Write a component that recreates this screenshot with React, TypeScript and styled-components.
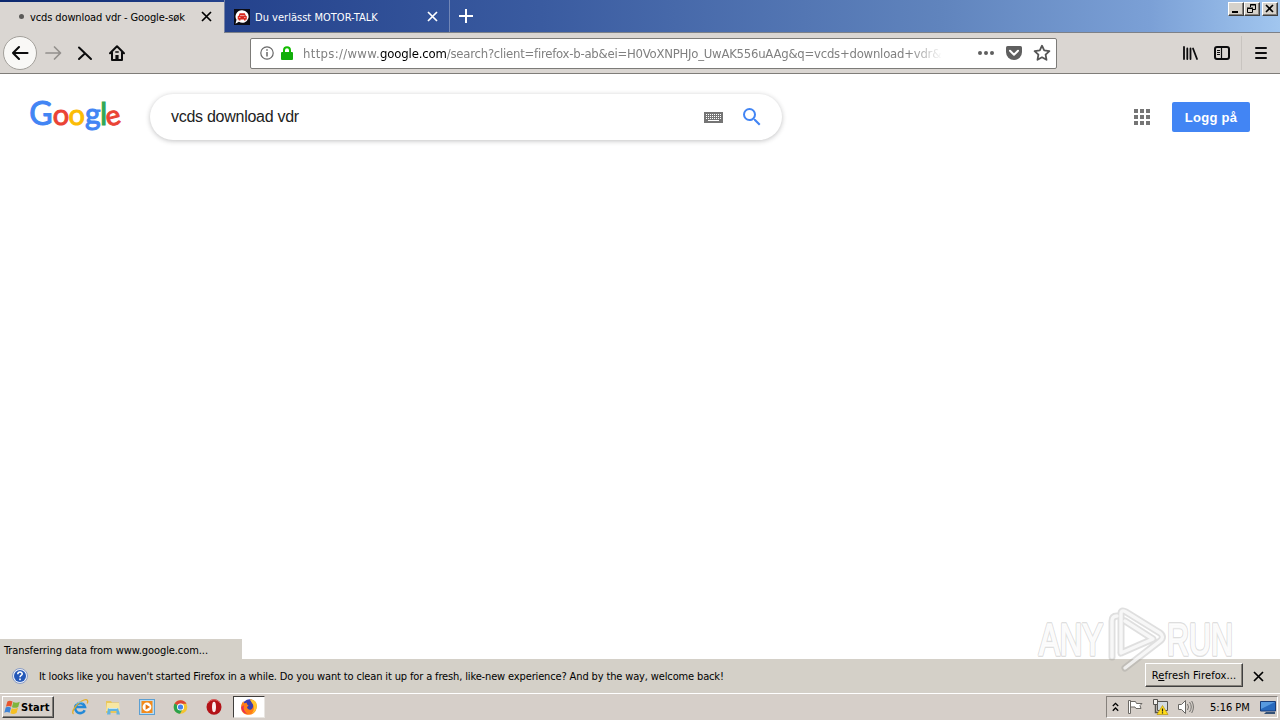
import React from 'react';
import styled, { createGlobalStyle } from 'styled-components';

const GlobalStyle = createGlobalStyle`
  * {
    box-sizing: border-box;
  }

  body {
    margin: 0;
    overflow: hidden;
    background: #ffffff;
    font-family: 'DejaVu Sans Condensed', 'DejaVu Sans', sans-serif;
    font-size: 11px;
    color: #000000;
  }

  svg {
    display: block;
    flex-shrink: 0;
  }
`;

const Desktop = styled.div`
  width: 1280px;
  height: 720px;
  display: flex;
  flex-direction: column;
  position: relative;
`;

const Label = styled.span<{ $size?: number; $spacing?: number }>`
  display: inline-block;
  padding-top: 2px;
  font-family: 'DejaVu Sans Condensed', 'DejaVu Sans', sans-serif;
  font-stretch: condensed;
  font-size: ${({ $size = 11 }) => $size}px;
  letter-spacing: ${({ $spacing = 0 }) => $spacing}px;
  line-height: 14px;
  white-space: nowrap;
`;

const TitleBar = styled.header`
  height: 33px;
  flex-shrink: 0;
  display: flex;
  border-bottom: 1px solid #7d8188;
  background: linear-gradient(90deg, #0c286e 0, #24428c 225px, #3a5ba0 540px, #6084bd 940px, #7ba0d6 1150px, #a1c6ef 1280px);
`;

const Tab = styled.div<{ $active?: boolean }>`
  width: ${({ $active }) => ($active ? 224 : 226)}px;
  height: ${({ $active }) => ($active ? 31 : 32)}px;
  margin-top: ${({ $active }) => ($active ? 2 : 0)}px;
  padding: ${({ $active }) => ($active ? '0 12px 2px 19px' : '1px 11px 0 9px')};
  display: flex;
  align-items: center;
  gap: ${({ $active }) => ($active ? 6 : 5)}px;
  color: ${({ $active }) => ($active ? '#000000' : '#ffffff')};
  background: ${({ $active }) => ($active ? '#dad6d2' : 'transparent')};
  border-left: ${({ $active }) => ($active ? 'none' : '1px solid #7482a6')};
  border-right: ${({ $active }) => ($active ? 'none' : '1px solid #7186b7')};

  svg:last-child {
    margin-left: auto;
  }
`;

const LoadingDot = styled.span`
  width: 5px;
  height: 5px;
  border-radius: 50%;
  background: #5b5a58;
`;

const NewTab = styled.div`
  padding: 8px 8px 0;
`;

const WindowButtons = styled.div`
  margin-left: auto;
  padding: 2px 2px 0 0;
  display: flex;
  align-items: flex-start;
`;

const WindowButton = styled.span<{ $gap?: boolean }>`
  width: 16px;
  height: 14px;
  margin-left: ${({ $gap }) => ($gap ? 2 : 0)}px;
  background: #d6d2cb;
  border: 1px solid;
  border-color: #ffffff #404040 #404040 #ffffff;
  box-shadow: inset -1px -1px 0 #85817c;
`;

const NavBar = styled.nav`
  height: 41px;
  flex-shrink: 0;
  padding: 0 10px 0 3px;
  display: flex;
  align-items: center;
  background: #dad6d2;
  border-bottom: 1px solid #7f7d79;
`;

const BackButton = styled.span`
  width: 34px;
  height: 34px;
  display: flex;
  align-items: center;
  justify-content: center;
  border: 1px solid #a3a09b;
  border-radius: 50%;
  background: #f9f8f6;
`;

const NavIcons = styled.div`
  width: 213px;
  padding-left: 6px;
  display: flex;
  gap: 12px;
`;

const UrlBar = styled.div`
  width: 807px;
  height: 31px;
  padding: 0 5px 0 9px;
  display: flex;
  align-items: center;
  background: #ffffff;
  border: 1px solid #7c7b78;
  border-radius: 2px;
`;

const UrlText = styled.div`
  width: 640px;
  margin-left: 10px;
  padding-top: 1px;
  overflow: hidden;
  white-space: nowrap;
  font-size: 13px;
  letter-spacing: -0.24px;
  line-height: 18px;
  color: #808080;
  mask-image: linear-gradient(90deg, #000 605px, transparent 640px);
`;

const UrlScheme = styled.span`
  letter-spacing: 0.32px;
`;

const UrlHost = styled.span`
  letter-spacing: -0.15px;
  color: #000000;
`;

const UrlActions = styled.div`
  margin-left: auto;
  display: flex;
  align-items: center;
  gap: 10px;
`;

const ToolbarEnd = styled.div`
  height: 34px;
  margin-left: auto;
  display: flex;
  align-items: center;
  gap: 14px;
`;

const MenuButton = styled.div`
  height: 34px;
  margin-left: -4px;
  padding-left: 10px;
  display: flex;
  align-items: center;
  border-left: 1px solid #c8c4c0;
`;

const Page = styled.main`
  flex: 1;
  display: flex;
  flex-direction: column;
  justify-content: space-between;
  background: #ffffff;
`;

const SearchHeader = styled.div`
  height: 86px;
  padding: 0 30px 0 26px;
  display: flex;
  align-items: center;
`;

const SearchBox = styled.div`
  width: 632px;
  height: 46px;
  margin-left: 24px;
  padding: 0 18px 0 21px;
  display: flex;
  align-items: center;
  background: #ffffff;
  border-radius: 23px;
  box-shadow: 0 1px 5px rgba(32, 33, 36, 0.28);
`;

const SearchQuery = styled.span`
  flex: 1;
  font-family: 'Liberation Sans', Arial, sans-serif;
  font-size: 16px;
  letter-spacing: -0.27px;
  line-height: 20px;
  color: #222222;
`;

const SearchIcons = styled.div`
  display: flex;
  align-items: center;
  gap: 17px;
`;

const AppsGrid = styled.div`
  margin-left: auto;
  display: grid;
  grid-template-columns: repeat(3, 4px);
  grid-auto-rows: 4px;
  gap: 2px;
`;

const AppsDot = styled.span`
  background: #757575;
`;

const SignInButton = styled.button`
  width: 78px;
  height: 30px;
  margin-left: 22px;
  padding: 0;
  border: none;
  border-radius: 2px;
  background: #4285f4;
  color: #ffffff;
  font-family: 'Liberation Sans', Arial, sans-serif;
  font-size: 13px;
  font-weight: bold;
  letter-spacing: 0.3px;
`;

const StatusBubble = styled.div`
  width: 242px;
  height: 20px;
  padding: 3px 0 0 4px;
  background: #d4d0c8;
`;

const NotificationBar = styled.div`
  height: 34px;
  flex-shrink: 0;
  padding: 0 16px 0 12px;
  display: flex;
  align-items: center;
  gap: 11px;
  background: #d4d0c8;
`;

const RefreshButton = styled.button`
  width: 98px;
  height: 24px;
  margin: -2px -1px 0 auto;
  padding: 0;
  border: 1px solid;
  border-color: #ffffff #404040 #404040 #ffffff;
  box-shadow: inset -1px -1px 0 #86827b;
  background: #d6d2ca;
`;

const Taskbar = styled.footer`
  height: 27px;
  flex-shrink: 0;
  padding: 2px 2px 0 2px;
  display: flex;
  align-items: flex-start;
  background: #d6cfc9;
  border-top: 1px solid #ffffff;
`;

const StartButton = styled.div`
  width: 52px;
  height: 22px;
  padding-left: 1px;
  display: flex;
  align-items: center;
  border: 1px solid;
  border-color: #ffffff #404040 #404040 #ffffff;
  box-shadow: inset -1px -1px 0 #807c77;

  span {
    font-weight: bold;
  }
`;

const QuickLaunch = styled.div`
  height: 22px;
  padding-left: 17px;
  display: flex;
  align-items: center;
  gap: 16px;
`;

const ActiveTask = styled.div`
  width: 32px;
  height: 22px;
  margin-left: 10px;
  display: flex;
  align-items: center;
  justify-content: center;
  background: #ffffff;
  border: 1px solid;
  border-color: #403e3c #e9e6e2 #e9e6e2 #403e3c;
`;

const Tray = styled.div`
  width: 172px;
  height: 22px;
  margin-left: auto;
  padding: 0 1px 0 5px;
  display: flex;
  align-items: center;
  gap: 8px;
  border: 1px solid;
  border-color: #86817c #ffffff #ffffff #86817c;
`;

const TrayClock = styled.div`
  width: 43px;
  margin-left: 7px;
  display: flex;
`;

const Watermark = styled.div`
  position: absolute;
  left: 1034px;
  top: 604px;
  pointer-events: none;
`;

const CloseIcon = ({ color = '#000', size = 11 }: { color?: string; size?: number }) => (
  <svg width={size} height={size} viewBox="0 0 11 11" stroke={color} strokeWidth="1.7">
    <path d="M1 1l9 9M10 1l-9 9" />
  </svg>
);

const MotorTalkIcon = () => (
  <svg width="16" height="16" viewBox="0 0 16 16">
    <rect width="16" height="16" fill="#0b0b14" />
    <path d="M8.3 1.2a6.3 6.3 0 1 1-3.4 11.6L1.5 14.8l1-4A6.3 6.3 0 0 1 8.3 1.2z" fill="#fff" />
    <path d="M5.6 4.2h5.2l1 2.5 1 .6v3.2h-1.2v1H10v-1H6.4v1H4.8v-1H3.7V7.3l1-.6z" fill="#d8261c" />
    <path d="M6 6.6h4.6M4.9 8.6h1.6M10 8.6h1.6" stroke="#fff" strokeWidth=".6" />
  </svg>
);

const ArrowIcon = ({ color, flip }: { color: string; flip?: boolean }) => (
  <svg width="20" height="18" viewBox="0 0 20 18" fill="none" stroke={color} strokeWidth={flip ? 1.7 : 2.1} strokeLinecap="round" strokeLinejoin="round">
    <path d={flip ? 'M3 9h14M11.5 3l6 6-6 6' : 'M17.5 9H3M9 3L3 9l6 6'} />
  </svg>
);

const StopIcon = () => (
  <svg width="20" height="18" viewBox="0 0 20 18" fill="none" stroke="#0c0c0d" strokeWidth="2" strokeLinecap="round">
    <path d="M4 3.5l12 11.5M9.6 9.8L4 15" />
  </svg>
);

const HomeIcon = () => (
  <svg width="20" height="18" viewBox="0 0 20 18" fill="none" stroke="#0c0c0d" strokeWidth="2" strokeLinejoin="round" strokeLinecap="round">
    <path d="M3 9.2L10 2.3l7 6.9M5 8.5V16h10V8.5" />
    <path d="M8.4 16v-5h3.2v5z" fill="#0c0c0d" stroke="none" />
    <path d="M8.8 8h2.4" strokeWidth="1.5" />
  </svg>
);

const InfoIcon = () => (
  <svg width="14" height="14" viewBox="0 0 14 14">
    <circle cx="7" cy="7" r="6.2" fill="none" stroke="#686868" strokeWidth="1.2" />
    <path d="M7 6v4.6M7 3.2v1.6" stroke="#686868" strokeWidth="1.5" />
  </svg>
);

const LockSvg = styled.svg`
  margin-left: 7px;
`;

const LockIcon = () => (
  <LockSvg width="12" height="14" viewBox="0 0 12 14">
    <path d="M3 7V4.2a3 3 0 0 1 6 0V7" fill="none" stroke="#12bc00" strokeWidth="2" />
    <rect y="6" width="12" height="8" rx="1" fill="#12ae0a" />
  </LockSvg>
);

const DotsIcon = () => (
  <svg width="18" height="16" viewBox="0 0 18 16" fill="#5f5f5f">
    <circle cx="3" cy="8" r="2" />
    <circle cx="9" cy="8" r="2" />
    <circle cx="15" cy="8" r="2" />
  </svg>
);

const PocketIcon = () => (
  <svg width="18" height="16" viewBox="0 0 18 16">
    <path d="M2.6 1h12.8Q17 1 17 2.6V7a8 8 0 0 1-16 0V2.6Q1 1 2.6 1z" fill="#5f5f5f" />
    <path d="M5 5.8l4 3.9 4-3.9" fill="none" stroke="#fff" strokeWidth="2" strokeLinecap="round" strokeLinejoin="round" />
  </svg>
);

const StarIcon = () => (
  <svg width="18" height="18" viewBox="0 0 18 18">
    <path d="M9 1.7l2.2 4.7 5.2.7-3.8 3.6.9 5.1L9 13.3l-4.5 2.5.9-5.1L1.6 7.1l5.2-.7z" fill="none" stroke="#555" strokeWidth="1.8" strokeLinejoin="round" />
  </svg>
);

const LibraryIcon = () => (
  <svg width="18" height="16" viewBox="0 0 18 16" stroke="#0c0c0d" strokeWidth="1.8" strokeLinecap="round">
    <path d="M3 2v12M6.3 3.5V14M9.5 3.5V14M12 3.5L16 14" />
  </svg>
);

const SidebarIcon = () => (
  <svg width="18" height="16" viewBox="0 0 18 16" fill="none" stroke="#0c0c0d">
    <rect x="2" y="2" width="14" height="12" rx="2" strokeWidth="2" />
    <path d="M8.5 2v12" strokeWidth="1.2" />
    <path d="M4 5.5h3M4 7.5h3M4 9.5h3" />
  </svg>
);

const MenuIcon = () => (
  <svg width="18" height="16" viewBox="0 0 18 16" stroke="#0c0c0d" strokeWidth="2" strokeLinecap="round">
    <path d="M4 3h10M4 8h10M4 13h10" />
  </svg>
);

const GoogleLogo = () => (
  <svg width="100" height="48" viewBox="-4 -2 100 48" fontFamily="Lato, sans-serif" fontSize="32" strokeWidth="1">
    <text x="-0.8" y="30" fill="#4285f4" stroke="#4285f4">G</text>
    <text x="22.8" y="30" fill="#ea4335" stroke="#ea4335" fontSize="29">o</text>
    <text x="38.6" y="30" fill="#fbbc05" stroke="#fbbc05" fontSize="29">o</text>
    <text x="55" y="30" fill="#4285f4" stroke="#4285f4" fontSize="30">g</text>
    <text x="70" y="30" fill="#34a853" stroke="#34a853" fontSize="31">l</text>
    <text x="75.8" y="30" fill="#ea4335" stroke="#ea4335" fontSize="28" transform="rotate(-14 84 23)">e</text>
  </svg>
);

const KeyboardIcon = () => (
  <svg width="19" height="11" viewBox="0 0 19 11">
    <rect width="19" height="11" fill="#757575" />
    <path d="M2 2.5h15M2 4.5h15M2 6.5h15" stroke="#fff" strokeDasharray="1 1" />
    <path d="M4 8.5h11" stroke="#fff" />
  </svg>
);

const SearchIcon = () => (
  <svg width="24" height="24" viewBox="0 0 24 24" fill="#4285f4">
    <path d="M15.5 14h-.79l-.28-.27A6.47 6.47 0 0 0 16 9.5 6.5 6.5 0 1 0 9.5 16c1.61 0 3.09-.59 4.23-1.57l.27.28v.79l5 4.99L20.49 19l-4.99-5zm-6 0C7.01 14 5 11.99 5 9.5S7.01 5 9.5 5 14 7.01 14 9.5 11.99 14 9.5 14z" />
  </svg>
);

const HelpIcon = () => (
  <svg width="16" height="16" viewBox="0 0 16 16">
    <circle cx="8" cy="8" r="7.5" fill="#e9eef8" stroke="#8b9dc4" />
    <circle cx="8" cy="8" r="6" fill="#2458b8" />
    <path d="M5.8 6.2c0-3 4.6-2.8 4.4-.2C10.1 7.5 8 7.5 8 9.2M8 10.6v1.7" fill="none" stroke="#fff" strokeWidth="1.6" />
  </svg>
);

const WindowsIcon = () => (
  <svg width="17" height="17" viewBox="0 0 16 16">
    <path d="M3.2 2.3Q5.5.8 8 2.4L6.8 7.3Q4.3 5.8 1.8 7.3z" fill="#e8542c" />
    <path d="M8.7 2.8Q11.5 4.3 14.8 2.5L13.4 7.5Q10.5 9 7.5 7.7z" fill="#7fb53c" />
    <path d="M1.6 8Q4 6.7 6.6 8.2L5.3 13Q2.8 11.5.3 13z" fill="#3f83d6" />
    <path d="M7.3 8.6Q10.3 10 13.2 8.3L11.8 13.1Q8.8 14.8 6 13.4z" fill="#f5bf23" />
  </svg>
);

const ExplorerIcon = () => (
  <svg width="18" height="18" viewBox="0 0 18 18" fill="none">
    <path d="M13.7 12.2A5 5 0 1 1 14 9H5.5" stroke="#2389d7" strokeWidth="2.6" />
    <path d="M2.5 16C-.5 13.5 7 3.8 13 2c4-1.2 4.2 1.5 3.2 3.5" stroke="#e2ad28" strokeWidth="1.3" />
    <path d="M5 6.2A5 5 0 0 1 12 5" stroke="#7cc8f5" />
  </svg>
);

const FolderIcon = () => (
  <svg width="17" height="18" viewBox="1 0 17 18">
    <path d="M2 3h5l1 1.5h7V15H2z" fill="#e9c75c" />
    <path d="M3 5h12l1 8H2z" fill="#f8e7a2" />
    <path d="M4 10h10l2 6.5h-3.5V13h-6v3.5H3z" fill="#62b4e0" />
    <path d="M4.5 10.5h9" stroke="#c4e7f7" />
  </svg>
);

const MediaIcon = () => (
  <svg width="18" height="18" viewBox="0 0 18 18">
    <rect x="1.5" y="1.5" width="15" height="15" fill="#b9dcf3" stroke="#5c9fd2" />
    <rect x="3.5" y="3" width="11" height="12" fill="#f38b1d" />
    <circle cx="9" cy="9" r="4.4" fill="#fff" />
    <path d="M7.6 6.2v5.6L12 9z" fill="#e57411" />
  </svg>
);

const ChromeIcon = () => (
  <svg width="17" height="16" viewBox="-.5 0 17 16">
    <circle cx="8" cy="8" r="6.8" fill="#f4c430" />
    <path d="M8 8L2.1 4.6A6.8 6.8 0 0 1 14 4.7H8z" fill="#dd4335" />
    <path d="M8 8L2.1 4.6A6.8 6.8 0 0 0 7.5 14.8L10.5 9.5z" fill="#2ba24c" />
    <circle cx="8" cy="8" r="3.5" fill="#fff" />
    <circle cx="8" cy="8" r="2.6" fill="#4583ea" />
  </svg>
);

const OperaIcon = () => (
  <svg width="18" height="18" viewBox="0 0 18 18">
    <ellipse cx="9" cy="9" rx="7.5" ry="7.8" fill="#b31217" />
    <path d="M3 5a7.2 7.2 0 0 1 12 0" fill="none" stroke="#e66460" />
    <ellipse cx="9" cy="9" rx="2" ry="5.2" fill="#fbeeee" />
  </svg>
);

const FirefoxIcon = () => (
  <svg width="18" height="18" viewBox="0 0 18 18">
    <circle cx="9.5" cy="8" r="6.8" fill="#3a3fb0" />
    <path d="M10 1.5c5 0 7 4 6.7 7.5-.3 4.5-3.5 7.8-7.8 7.8C4 16.8 1 13.5 1 9.4c0-2.8 1-4.6 2.3-6.2l.8 2 2.8-.5c-.2 1.5.3 2.1 1.7 2.6L7 9.2c.6 3 4 3 5.3 1.2 1.6-2.2 1-4.5-.6-6z" fill="#ff7d16" />
    <path d="M10 1.4c5.6-.2 8 4.8 6.3 9.4-1 2.7-3 4.4-5 5.2 3.2-3.5 3.2-7 1.5-10z" fill="#ffc52e" />
    <path d="M1.2 9c.5 4.5 3 6.5 6.4 7C3.6 13.3 3 10 4.2 7.3z" fill="#e82c59" />
  </svg>
);

const ChevronsIcon = () => (
  <svg width="7" height="10" viewBox="0 0 7 10" fill="none" stroke="#000" strokeWidth="1.3">
    <path d="M.8 4L3.5 1.3 6.2 4M.8 8.7L3.5 6l2.7 2.7" />
  </svg>
);

const FlagIcon = () => (
  <svg width="17" height="16" viewBox="0 0 17 16" fill="#fff" stroke="#6c6965">
    <path d="M1.5 1.5h2v13h-2zM3.5 2.5h5l1 2h5.5l-2 2 1 3H9l-1-1.5H3.5z" />
  </svg>
);

const NetworkIcon = () => (
  <svg width="17" height="16" viewBox="0 0 17 16">
    <path d="M5.5 2.5h10v9h-10z" fill="#d4dbe0" stroke="#55534f" />
    <path d="M1.5.5v5h4v-5z" fill="#f2f0ed" stroke="#55534f" />
    <path d="M3.5 5.5v8h3" fill="none" stroke="#55534f" strokeWidth="1.5" />
    <path d="M10.5 6.5l5.5 9H5z" fill="#ffdc18" stroke="#b8930c" strokeWidth=".7" />
    <path d="M10.5 9.5v3M10.5 13.3v1.2" stroke="#222" strokeWidth="1.2" />
  </svg>
);

const VolumeIcon = () => (
  <svg width="18" height="16" viewBox="0 0 18 16" fill="none" stroke="#686663">
    <path d="M1.5 5.5h3l4-4v13l-4-4h-3z" fill="#fff" />
    <path d="M10.5 5q2 3 0 6M12.5 3q3.5 5 0 10M14.7 2q3.5 6 0 12" strokeWidth=".9" />
  </svg>
);

const MonitorIcon = () => (
  <svg width="16" height="16" viewBox="0 0 16 16">
    <path d="M.5 2.5h15v9.5H.5z" fill="#2869bd" stroke="#193c78" />
    <path d="M1 3h14L1 10z" fill="#5799df" />
    <path d="M6 13h9v2H4z" fill="#345176" />
  </svg>
);

const logoMark = 'M78 53V17q0-5 5-5M87 49V10q0-5 5-2l34 21q5 4 0 8L91 64M87 49l32-14L91 17M87 49V17';

const AnyRunLogo = () => (
  <svg width="240" height="80" viewBox="0 0 240 80" fontFamily="'Liberation Sans Narrow', 'Liberation Sans', sans-serif" fontSize="45">
    <g stroke="#8c8c8c" strokeOpacity="0.3" strokeWidth="4" strokeLinejoin="round" fill="none">
      <text x="5" y="51" textLength="64" lengthAdjust="spacingAndGlyphs">ANY</text>
      <text x="133" y="51" textLength="66" lengthAdjust="spacingAndGlyphs">RUN</text>
    </g>
    <g stroke="#ffffff" strokeOpacity="0.8" strokeWidth="1.6" fill="#ffffff" fillOpacity="0.9">
      <text x="5" y="51" textLength="64" lengthAdjust="spacingAndGlyphs">ANY</text>
      <text x="133" y="51" textLength="66" lengthAdjust="spacingAndGlyphs">RUN</text>
    </g>
    <g fill="none" strokeLinejoin="round" strokeLinecap="round">
      <path d={logoMark} stroke="#8c8c8c" strokeOpacity="0.28" strokeWidth="7" />
      <path d={logoMark} stroke="#ffffff" strokeOpacity="0.75" strokeWidth="3.4" />
    </g>
  </svg>
);

const App: React.FC = () => {
  return (
    <>
      <GlobalStyle />
      <Desktop>
        <TitleBar>
          <Tab $active>
            <LoadingDot />
            <Label $spacing={-0.12}>vcds download vdr - Google-søk</Label>
            <CloseIcon />
          </Tab>
          <Tab>
            <MotorTalkIcon />
            <Label $spacing={0.02}>Du verlässt MOTOR-TALK</Label>
            <CloseIcon color="#fff" />
          </Tab>
          <NewTab>
            <svg width="16" height="16" viewBox="0 0 16 16" stroke="#fff" strokeWidth="2">
              <path d="M8 1v14M1 8h14" />
            </svg>
          </NewTab>
          <WindowButtons>
            <WindowButton>
              <svg width="13" height="11" viewBox="0 0 13 11"><path d="M3 9h6" stroke="#000" strokeWidth="2" /></svg>
            </WindowButton>
            <WindowButton>
              <svg width="13" height="11" viewBox="0 0 13 11" fill="none" stroke="#000">
                <path d="M5.5 4V1.5h5v5H8M5 2h6M2.5 5.5h5v4h-5zM2 5h6" />
              </svg>
            </WindowButton>
            <WindowButton $gap>
              <svg width="13" height="11" viewBox="0 0 13 11"><path d="M3 2l7 7M10 2L3 9" stroke="#000" strokeWidth="1.6" /></svg>
            </WindowButton>
          </WindowButtons>
        </TitleBar>

        <NavBar>
          <BackButton>
            <ArrowIcon color="#0c0c0d" />
          </BackButton>
          <NavIcons>
            <ArrowIcon color="#93908d" flip />
            <StopIcon />
            <HomeIcon />
          </NavIcons>
          <UrlBar>
            <InfoIcon />
            <LockIcon />
            <UrlText>
              <UrlScheme>https://www.</UrlScheme>
              <UrlHost>google.com</UrlHost>/search?client=firefox-b-ab&amp;ei=H0VoXNPHJo_UwAK556uAAg&amp;q=vcds+download+vdr&amp;
            </UrlText>
            <UrlActions>
              <DotsIcon />
              <PocketIcon />
              <StarIcon />
            </UrlActions>
          </UrlBar>
          <ToolbarEnd>
            <LibraryIcon />
            <SidebarIcon />
            <MenuButton>
              <MenuIcon />
            </MenuButton>
          </ToolbarEnd>
        </NavBar>

        <Page>
          <SearchHeader>
            <GoogleLogo />
            <SearchBox>
              <SearchQuery>vcds download vdr</SearchQuery>
              <SearchIcons>
                <KeyboardIcon />
                <SearchIcon />
              </SearchIcons>
            </SearchBox>
            <AppsGrid>
              {Array.from({ length: 9 }, (_, i) => (
                <AppsDot key={i} />
              ))}
            </AppsGrid>
            <SignInButton>Logg på</SignInButton>
          </SearchHeader>
          <StatusBubble>
            <Label $spacing={-0.08}>Transferring data from www.google.com...</Label>
          </StatusBubble>
        </Page>

        <NotificationBar>
          <HelpIcon />
          <Label $spacing={-0.14}>
            It looks like you haven't started Firefox in a while. Do you want to clean it up for a fresh, like-new experience? And by the way, welcome back!
          </Label>
          <RefreshButton>
            <Label $spacing={0.12}>R<u>e</u>fresh Firefox...</Label>
          </RefreshButton>
          <CloseIcon />
        </NotificationBar>

        <Taskbar>
          <StartButton>
            <WindowsIcon />
            <Label $spacing={0.1}>Start</Label>
          </StartButton>
          <QuickLaunch>
            <ExplorerIcon />
            <FolderIcon />
            <MediaIcon />
            <ChromeIcon />
            <OperaIcon />
          </QuickLaunch>
          <ActiveTask>
            <FirefoxIcon />
          </ActiveTask>
          <Tray>
            <ChevronsIcon />
            <FlagIcon />
            <NetworkIcon />
            <VolumeIcon />
            <TrayClock>
              <Label>5:16 PM</Label>
            </TrayClock>
            <MonitorIcon />
          </Tray>
        </Taskbar>

        <Watermark>
          <AnyRunLogo />
        </Watermark>
      </Desktop>
    </>
  );
};

export default App;
